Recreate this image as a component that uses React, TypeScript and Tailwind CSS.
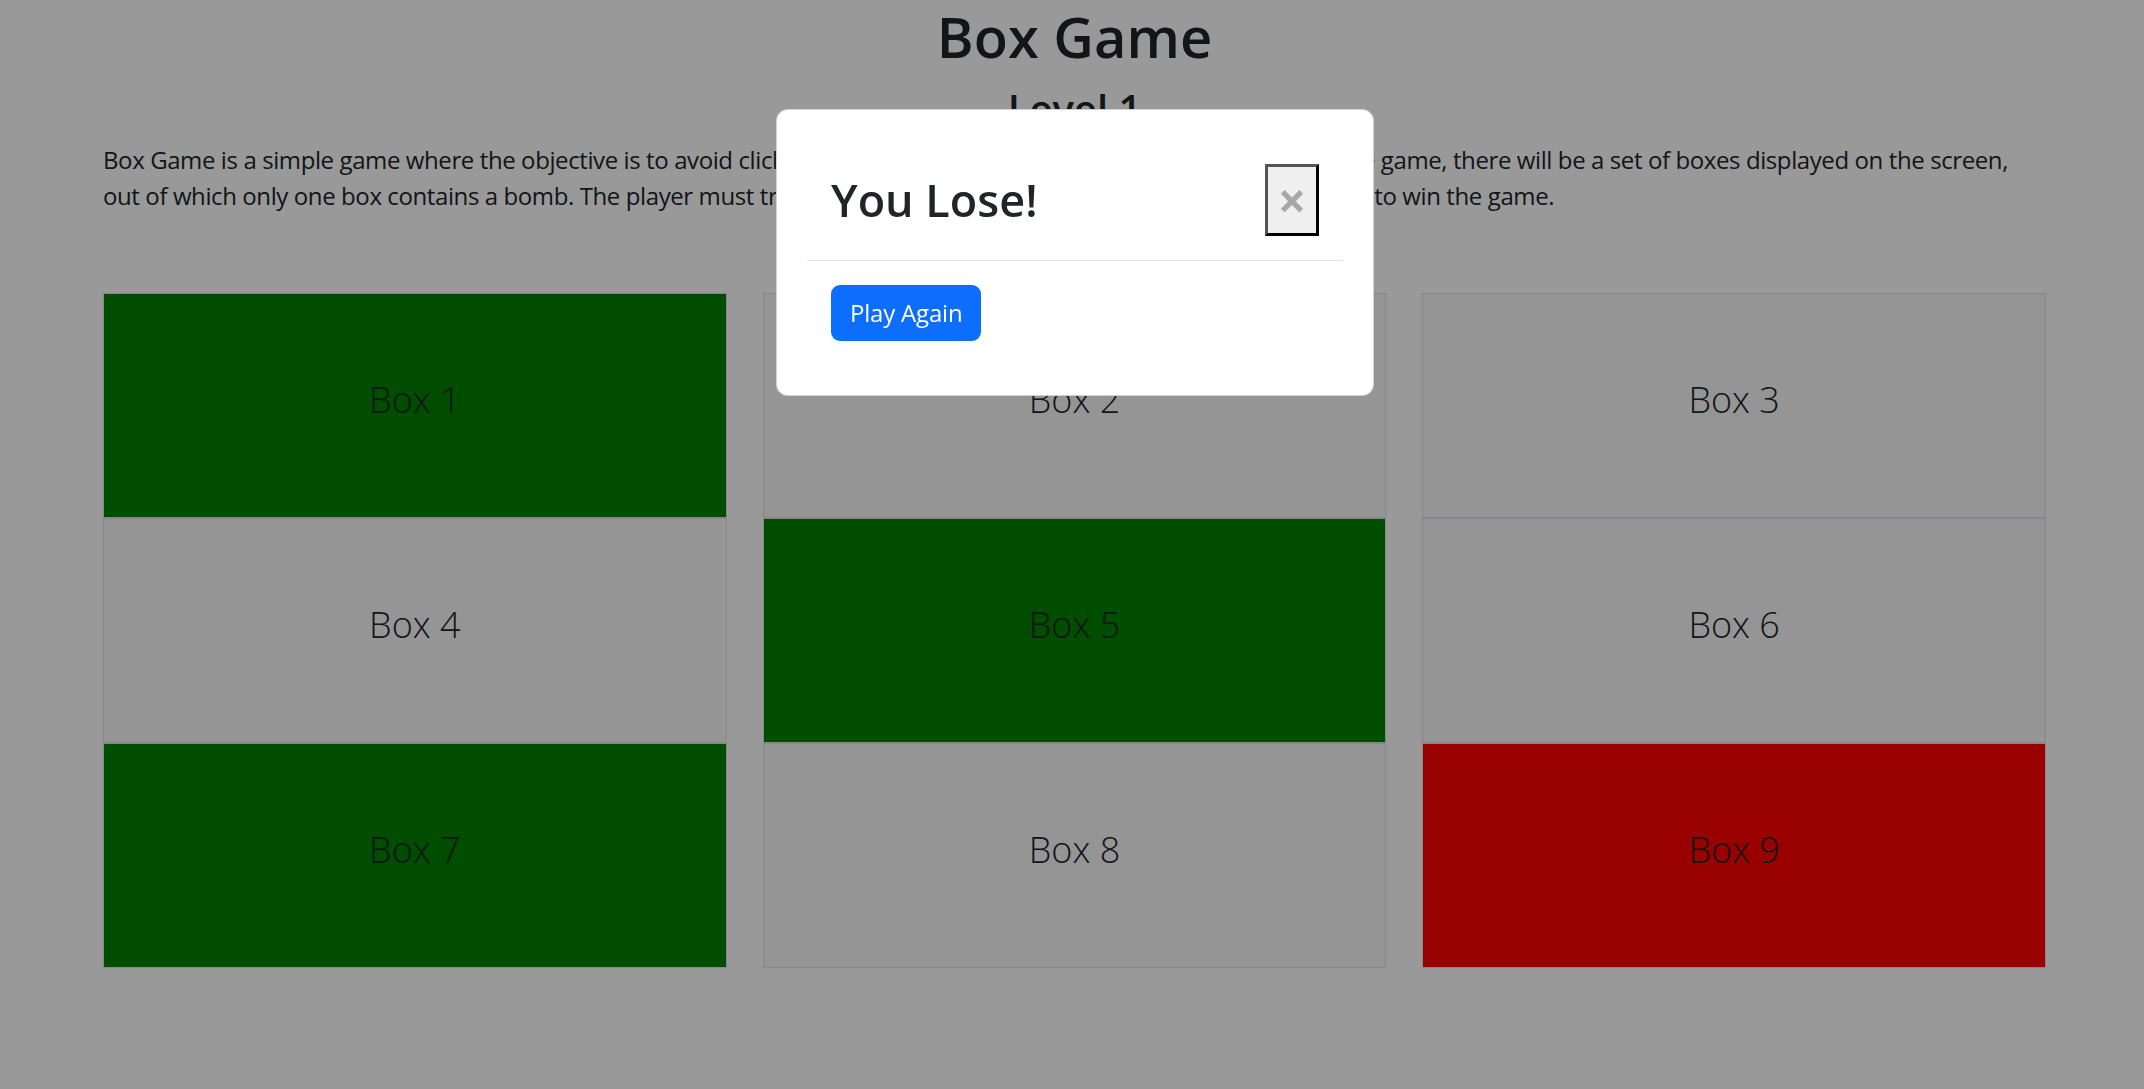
import React from "react";

const boxes = [
  { n: 1, color: "bg-[#008000]" },
  { n: 2, color: "bg-[#f8f9fa]" },
  { n: 3, color: "bg-[#f8f9fa]" },
  { n: 4, color: "bg-[#f8f9fa]" },
  { n: 5, color: "bg-[#008000]" },
  { n: 6, color: "bg-[#f8f9fa]" },
  { n: 7, color: "bg-[#008000]" },
  { n: 8, color: "bg-[#f8f9fa]" },
  { n: 9, color: "bg-[#ff0000]" },
];

const App = () => {
  return (
    <div className="min-h-screen bg-white font-['Open_Sans',sans-serif] text-[#212529]">
      <div className="pl-[103px] pr-[98px]">
        <h1 className="text-center text-[56px] font-semibold leading-[72px]">Box Game</h1>
        <h3 className="mt-3 text-center text-[40px] font-semibold leading-[50px]">Level 1</h3>
        <p className="mt-2 text-[24px] leading-[36px] tracking-[-0.4px]">
          Box Game is a simple game where the objective is to avoid clicking on the box that contains a bomb. At the start of the game, there will be a set of boxes displayed on the screen,
          <br />
          out of which only one box contains a bomb. The player must try to click on all the boxes that do not contain the bomb to win the game.
        </p>

        <div className="mt-[79px] grid grid-cols-3 gap-x-9">
          {boxes.map((b) => (
            <div
              key={b.n}
              className={`flex h-[225px] items-center justify-center border border-[#dee2e6] ${b.color}`}
            >
              <span className="pb-3 text-[36px] font-light">Box {b.n}</span>
            </div>
          ))}
        </div>
      </div>

      {/* backdrop */}
      <div className="fixed inset-0 bg-[rgba(0,0,0,0.4)]" />

      {/* modal */}
      <div className="fixed left-[776px] top-[109px] w-[598px] rounded-xl border border-[rgba(0,0,0,0.175)] bg-white p-[30px]">
        <div className="flex items-center justify-between border-b border-[#dee2e6] p-6">
          <h2 className="text-[45px] font-semibold leading-[72px]">You Lose!</h2>
          <button className="flex h-[72px] w-[54px] items-center justify-center border-[3px] border-t-[#555] border-l-[#555] border-b-black border-r-black bg-[#efefef] text-[50px] font-bold leading-none text-[#a8a8a8]">
            ×
          </button>
        </div>
        <div className="p-6">
          <button className="h-[56px] rounded-[9px] bg-[#0d6efd] px-[19px] text-[24px] leading-[36px] tracking-[-0.2px] text-white">
            Play Again
          </button>
        </div>
      </div>
    </div>
  );
};

export default App;
